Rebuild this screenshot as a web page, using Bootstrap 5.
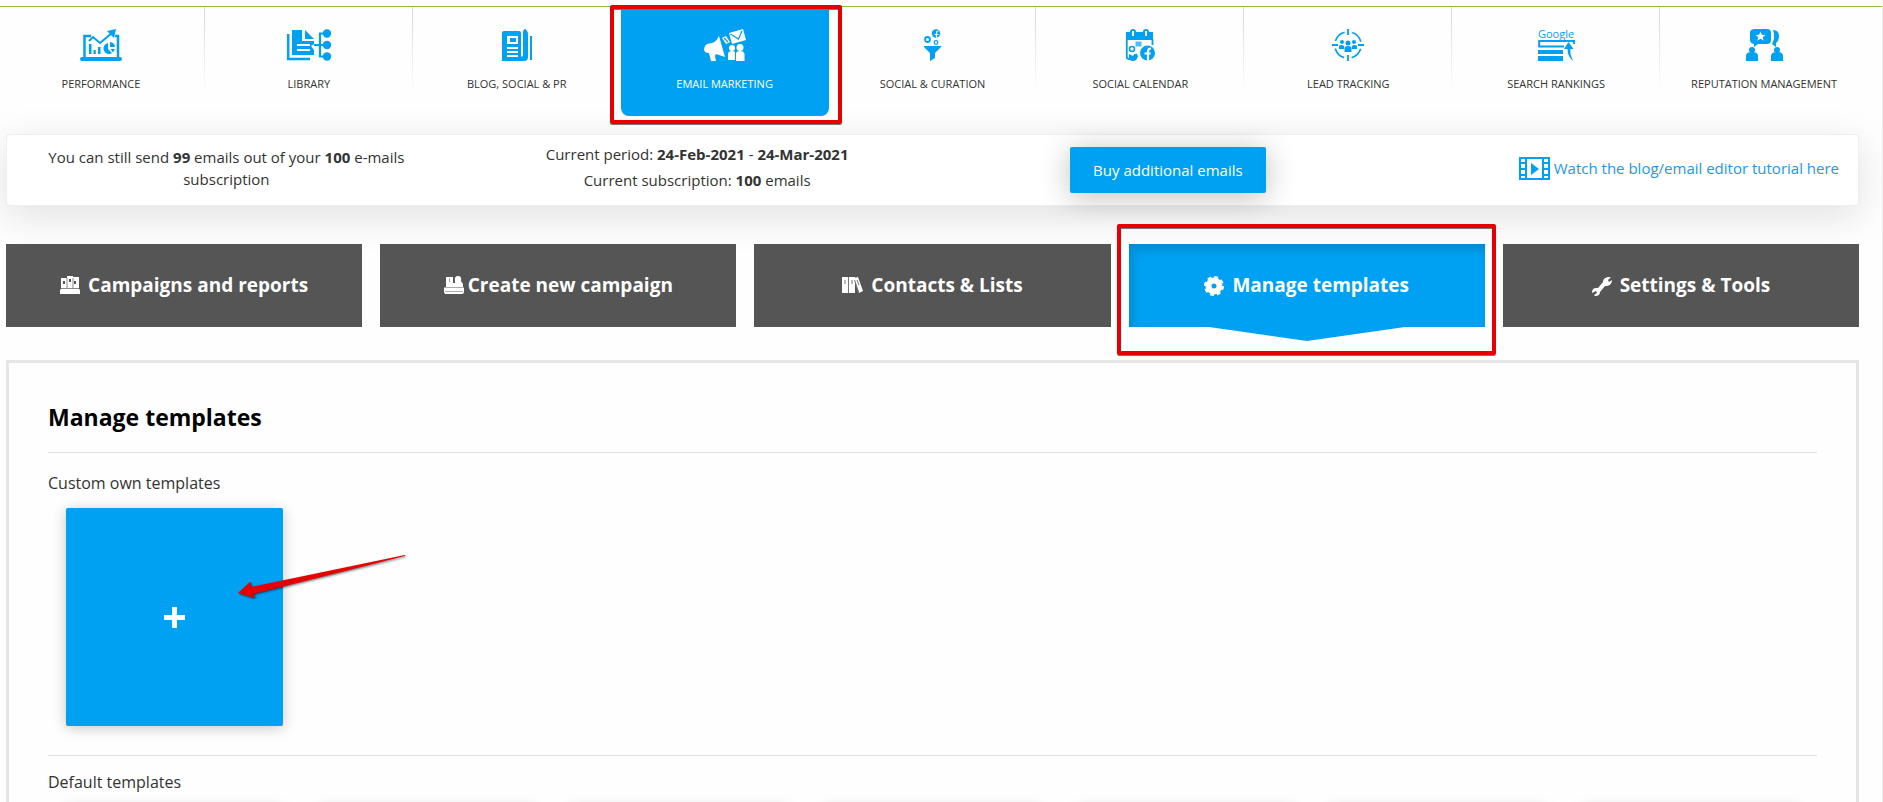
<!DOCTYPE html>
<html lang="en">
<head>
<meta charset="utf-8">
<meta name="viewport" content="width=device-width, initial-scale=1">
<title>Manage templates</title>
<link href="https://cdn.jsdelivr.net/npm/bootstrap@5.3.0/dist/css/bootstrap.min.css" rel="stylesheet">
<style>
  :root { --brand: #00a1f3; --alert: #e60000; }
  body { font-family: "Open Sans", sans-serif; font-size: 15px; color: #333; background: #fefefe; }
  .shell { padding: 6px 23px 0 6px; border-right: 1px solid #eee; }

  .nav-strip { margin: 0 -24px 0 -6px; border-top: 1px solid #8fbc3a; }
  .main-nav { margin: 0 15px 0 -3px; }
  .main-link { flex: 1 1 0; height: 109px; padding: 22px 0 0; font-size: 11px; line-height: 18px; color: #333; text-transform: uppercase;
    background: linear-gradient(#d8d8d8, #fff) right top / 1px 90px no-repeat; }
  .main-link svg { height: 32px; margin-bottom: 14px; color: var(--brand); overflow: visible; }
  .main-link.current { background: var(--brand); color: #fff; border-radius: 0 0 8px 8px; }
  .main-link.current svg { color: #fff; }
  .main-link.no-divider { background: none; }
  .logo-text { font-size: 11px; text-transform: none; }

  .frame { position: absolute; border: 4px solid var(--alert); border-radius: 2px; box-shadow: 0 1px 0 #777, inset 0 1px 0 #777; pointer-events: none; z-index: 3; }
  .frame-nav { inset: -2px -13px -8px -11px; }
  .frame-tab { inset: -20px -11px -28px -12px; }

  .info { margin-top: 18px; height: 72px; background: #fff; border: 1px solid #eee; border-radius: 4px; box-shadow: 0 10px 40px rgba(0,0,0,.12); }
  .info .row { --bs-gutter-x: 32px; }
  .quota { padding-top: 11px; line-height: 22px; }
  .period { padding-top: 6px; line-height: 26px; }
  .buy { margin-top: 12px; height: 46px; padding: 0 23px; font-size: 15px; color: #fff; background: var(--brand); border: 0; border-radius: 2px; box-shadow: 0 4px 30px rgba(0,0,0,.25); }
  .buy:hover { background: #0092dc; color: #fff; }
  .tutorial { margin: 22px 19px 0 0; color: #2196f3; line-height: 22px; }

  .tabs { gap: 18px; margin-top: 38px; }
  .tab { flex: 1 1 0; height: 83px; border: 0; border-radius: 0; background: #555; color: #fff; font-size: 19px; font-weight: 700; }
  .tab:hover { background: #444; color: #fff; }
  .tab.current, .tab.current:hover { background: var(--brand); box-shadow: inset 4px 6px 10px rgba(0,0,0,.14); }
  .pointer { position: absolute; top: 100%; left: 50%; width: 196px; height: 14px; transform: translateX(-50%); fill: var(--brand); }

  .panel { margin-top: 33px; padding: 36px 39px; border: 3px solid #e5e5e5; }
  .panel h1 { margin: 0 0 17px; font-size: 23px; line-height: 36px; font-weight: 700; color: #000; }
  .panel h2 { margin: 0; font-size: 16px; line-height: 24px; font-weight: 400; }
  .rule { margin: 0; border-top: 1px solid #e0e0e0; opacity: 1; }
  .custom-set { padding: 18px 0 29px; }
  .default-set { padding-top: 14px; }
  .tiles { display: grid; grid-template-columns: repeat(7, 1fr); padding-top: 13px; }
  .tile { margin: 0 18px; height: 218px; border-radius: 2px; border: 0; background: #fff; box-shadow: 0 2px 14px rgba(0,0,0,.22); }
  .tile.add { background: var(--brand); }
  .add-arrow { position: absolute; left: 172px; top: 44px; width: 170px; height: 50px; filter: drop-shadow(1px 1px 1px rgba(0,0,0,.6)); }
</style>
</head>
<body>
<div class="shell vh-100 overflow-hidden">
  <div class="nav-strip">
    <nav class="main-nav d-flex text-center" aria-label="Main">
      <a href="#" class="main-link d-flex flex-column align-items-center text-decoration-none">
        <svg width="42" viewBox="0 0 42 32" fill="currentColor"><rect y="28" width="42" height="4" rx="2"/><path d="M4.500 28V7H11M35 7h3v21" fill="none" stroke="currentColor" stroke-width="2.500"/><path d="M9 12l4-4 7 6L32 4" fill="none" stroke="currentColor" stroke-width="2"/><path d="M27 2l9-2-2 9zM9 15h2.500v10H9zM13.500 21h2.300v4h-2.300zM18 18h2.500v7H18z"/><path d="M28 14v6l4 4a5.500 5.500 0 1 1-4-10zM30 13a5.500 5.500 0 0 1 5 5h-5zM30.500 20h4.500l-2 3.500z"/></svg>
        Performance</a>
      <a href="#" class="main-link d-flex flex-column align-items-center text-decoration-none">
        <svg width="44" viewBox="0 0 44 32" fill="currentColor"><path d="M1.200 5v25H23" fill="none" stroke="currentColor" stroke-width="2.500"/><path fill-rule="evenodd" d="M5 1h10v11h12v3l-3 2 3 4v5H5zM10 15v2h13v-2zM10 20v2h13v-2z"/><path d="M18 1l9 9h-9z"/><path d="M40 4.500h-7v23h7M27 16h13" fill="none" stroke="currentColor" stroke-width="2.200"/><circle cx="40" cy="4.500" r="4.200"/><circle cx="40" cy="16" r="4.200"/><circle cx="40" cy="27.500" r="4.200"/></svg>
        Library</a>
      <a href="#" class="main-link no-divider d-flex flex-column align-items-center text-decoration-none">
        <svg width="32" viewBox="0 0 32 32" fill="currentColor"><path fill-rule="evenodd" d="M3 2h15q2 0 2 2v23l3 5H1V4q0-2 2-2zM6 7v8h11V7zM6 18v2h11v-2zM6 22v2h11v-2zM6 26v2h11v-2z"/><path d="M9 9h6v4H9zM22 4q0-4 2.500-4Q27 2 27 6v22q0 4-4 4-3-1-3-4l2-1zM29 7h2v24h-2z"/></svg>
        Blog, Social &amp; PR</a>
      <a href="#" class="main-link current position-relative d-flex flex-column align-items-center text-decoration-none" aria-current="page">
        <svg width="42" viewBox="0 0 42 32" fill="currentColor"><path d="M15 7l6 21-9-3-1 2 1 5H7L5 24q-5 0-5-4 0-3 3-5l5-1q4-1 7-7zM18 9l4-2 4 6-4 2zM25 4l14-4 3 11-14 4z"/><path d="M20 9l4 4M26.500 5l8 5L38 2" fill="none" stroke="#00a1f3" stroke-width="1.200"/><circle cx="28" cy="19" r="3"/><circle cx="36" cy="18.500" r="3.500"/><path d="M24 31v-6q0-3 4-3 2 0 3 1v8zM32 32v-7q0-3 4-3t4.500 3v7z"/></svg>
        Email Marketing
        <span class="frame frame-nav"></span></a>
      <a href="#" class="main-link d-flex flex-column align-items-center text-decoration-none">
        <svg width="18" viewBox="0 0 18 32" fill="currentColor"><path d="M0 17h17v1l-6 6v5l-5 3v-8l-6-6z"/><circle cx="3.500" cy="10.500" r="2.500" fill="none" stroke="currentColor" stroke-width="1.800"/><circle cx="12" cy="13.500" r="1.800" fill="none" stroke="currentColor" stroke-width="1.200"/><circle cx="12" cy="4.500" r="4.200"/><path d="M12.500 9V4q0-2 2-2M10.500 5.500h4" fill="none" stroke="#fff" stroke-width="1.200"/></svg>
        Social &amp; Curation</a>
      <a href="#" class="main-link d-flex flex-column align-items-center text-decoration-none">
        <svg width="30" viewBox="0 0 30 32" fill="currentColor"><path fill-rule="evenodd" d="M1 3h4q0-3 3-3t3 3h7q0-3 3-3t3 3h4v8H1zM7 2v5h2V2zM20 2v5h2V2z"/><path d="M1.800 10v18q0 2 3 2M27.500 10v6" fill="none" stroke="currentColor" stroke-width="1.800"/><path d="M10.500 12.500h6v5h-6z" opacity=".7"/><circle cx="7" cy="20" r="2.500" fill="none" stroke="currentColor" stroke-width="1.600"/><path d="M4 25l4 2q1-3 4-2l1 2q-1 5-5 5-3 0-4-2z"/><circle cx="22.500" cy="24" r="7.500"/><path d="M23 31.500V22.500q0-3 3-3M19.500 24.500h6" fill="none" stroke="#fff" stroke-width="2.200"/></svg>
        Social Calendar</a>
      <a href="#" class="main-link d-flex flex-column align-items-center text-decoration-none">
        <svg width="32" viewBox="0 0 32 32" fill="currentColor"><circle cx="16" cy="16" r="13.200" fill="none" stroke="currentColor" stroke-width="1.700" stroke-dasharray="13 7.730" stroke-dashoffset="-3.900"/><path d="M16 0v6M16 26v6M0 16h6M26 16h6" stroke="currentColor" stroke-width="1.800"/><circle cx="10" cy="13" r="2"/><circle cx="22" cy="13" r="2"/><circle cx="16" cy="14" r="2.500"/><path d="M7 20v-3q0-1 3-1 1 0 2 1v3zM25 20v-3q0-1-3-1-1 0-2 1v3zM12.500 23v-4q0-2 3.500-2t3.500 2v4z"/></svg>
        Lead Tracking</a>
      <a href="#" class="main-link d-flex flex-column align-items-center text-decoration-none">
        <svg width="37" viewBox="0 0 37 32" fill="currentColor"><text class="logo-text" x="18" y="9" text-anchor="middle">Google</text><path d="M26 17.500H1.200v-5.500H36V15" fill="none" stroke="currentColor" stroke-width="2"/><path d="M0 21h25v4H0zM0 27h25v5H0zM26 20l4.500-7 5 7h-3q-1 6 3 12-6-4-6-12z"/></svg>
        Search Rankings</a>
      <a href="#" class="main-link no-divider d-flex flex-column align-items-center text-decoration-none">
        <svg width="37" viewBox="0 0 37 32" fill="currentColor"><path d="M9 0h12q4 0 4 4v7q0 4-4 4h-9l-4 3v-3q-4-1-4-4V4q0-4 5-4z"/><path d="M14.500 2.500l1.400 3.300 3.600.2-2.800 2.300 1 3.500-3.200-2-3.200 2 1-3.500-2.800-2.300 3.600-.2z" fill="#fff"/><path d="M27 1q6 0 6 6 0 5-3 7v4l-4-3 2-5V5z"/><circle cx="6" cy="21" r="3"/><circle cx="31" cy="21" r="3"/><path d="M0 32v-5q0-4 6-4t6 4v5zM25 32v-5q0-4 6-4t6 4v5z"/></svg>
        Reputation Management</a>
    </nav>
  </div>

  <section class="info">
    <div class="row text-center">
      <div class="col-3 quota">You can still send <strong>99</strong> emails out of your <strong>100</strong> e-mails subscription</div>
      <div class="col-3 period">Current period: <strong>24-Feb-2021</strong> - <strong>24-Mar-2021</strong><br>Current subscription: <strong>100</strong> emails</div>
      <div class="col-3"><button type="button" class="btn buy">Buy additional emails</button></div>
      <div class="col-3 d-flex justify-content-end align-items-start">
        <a href="#" class="tutorial d-flex gap-1 text-decoration-none text-nowrap">
          <svg width="31" height="23" viewBox="0 0 31 23"><path fill="#00a1f3" fill-rule="evenodd" d="M0 0h31v23H0zM2 2v3h4V2zM2 7v4h4V7zM2 13v4h4v-4zM2 19v2h4v-2zM25 2v3h4V2zM25 7v4h4V7zM25 13v4h4v-4zM25 19v2h4v-2zM8 2v19h15V2z"/><path fill="#00a1f3" d="M12 6l8 6-8 6z"/></svg>
          Watch the blog/email editor tutorial here</a>
      </div>
    </div>
  </section>

  <div class="tabs d-flex">
    <button type="button" class="btn tab d-flex justify-content-center align-items-center gap-2">
      <svg width="20" height="20" viewBox="0 0 20 20"><path fill="#fff" fill-rule="evenodd" d="M1 2h6V0h6v1h6v12l1 1v4H0v-4l1-1zM3 5v3h2V5zM9 3v3h2V3zM14 5v3h2V5z"/><path d="M7 2v11M13 2v11M1 12.500h18" stroke="#888" fill="none"/></svg>
      Campaigns and reports</button>
    <button type="button" class="btn tab d-flex justify-content-center align-items-center gap-1">
      <svg width="20" height="20" viewBox="0 0 20 20"><path fill="#fff" d="M2 1h7v6h2V5q-1-5 3-5t3 5l2 3v3l1 1v4l-1 2H1l-1-2v-4l2-1z"/><path d="M5.500 2v4M0 11.500h20M1 15.500h18" stroke="#aaa" fill="none"/></svg>
      Create new campaign</button>
    <button type="button" class="btn tab d-flex justify-content-center align-items-center gap-2">
      <svg width="21" height="20" viewBox="0 0 21 20"><path fill="#fff" d="M0 1h6v16H0zM7 1h6v16H7zM12 2l4-1 5 14-4 2z"/><path d="M3 4v4M10 4v4M6.500 1v16M12.500 4l4 12M15 4l2 5" stroke="#777" fill="none"/></svg>
      Contacts &amp; Lists</button>
    <button type="button" class="btn tab current position-relative d-flex justify-content-center align-items-center gap-2">
      <svg width="20" height="20" viewBox="0 0 20 20"><circle cx="10" cy="10" r="5.500" fill="none" stroke="#fff" stroke-width="6"/><circle cx="10" cy="10" r="8.500" fill="none" stroke="#fff" stroke-width="3" stroke-dasharray="3.800 2.875"/></svg>
      Manage templates
      <svg class="pointer" viewBox="0 0 196 14"><path d="M0 0h196L98 14z"/></svg>
      <span class="frame frame-tab"></span></button>
    <button type="button" class="btn tab d-flex justify-content-center align-items-center gap-2">
      <svg width="20" height="20" viewBox="0 0 20 20"><path fill="#fff" d="M19 1l-3 3 1 2 3-2q0 5-5 6l-2 0-5 6q0 4-5 4l-1-1 3-2-1-2-4 2q0-5 4-5l2 0 5-6q0-5 7-5z"/></svg>
      Settings &amp; Tools</button>
  </div>

  <main class="panel">
    <h1>Manage templates</h1>
    <hr class="rule">
    <section class="custom-set">
      <h2>Custom own templates</h2>
      <div class="tiles">
        <button type="button" class="tile add position-relative d-flex justify-content-center align-items-center" aria-label="Add template">
          <svg width="21" height="21" viewBox="0 0 21 21"><path fill="#fff" d="M8 0h5v8h8v5h-8v8H8v-8H0V8h8z"/></svg>
          <svg class="add-arrow" viewBox="0 0 170 50"><path fill="#e60000" d="M0 41L12 30l1 1v4L167 3v1L15 42l2 3-1 1z"/></svg>
        </button>
      </div>
    </section>
    <hr class="rule">
    <section class="default-set">
      <h2>Default templates</h2>
      <div class="tiles">
        <div class="tile"></div><div class="tile"></div><div class="tile"></div><div class="tile"></div><div class="tile"></div><div class="tile"></div><div class="tile"></div>
      </div>
    </section>
  </main>
</div>
<script src="https://cdn.jsdelivr.net/npm/bootstrap@5.3.0/dist/js/bootstrap.bundle.min.js"></script>
</body>
</html>
